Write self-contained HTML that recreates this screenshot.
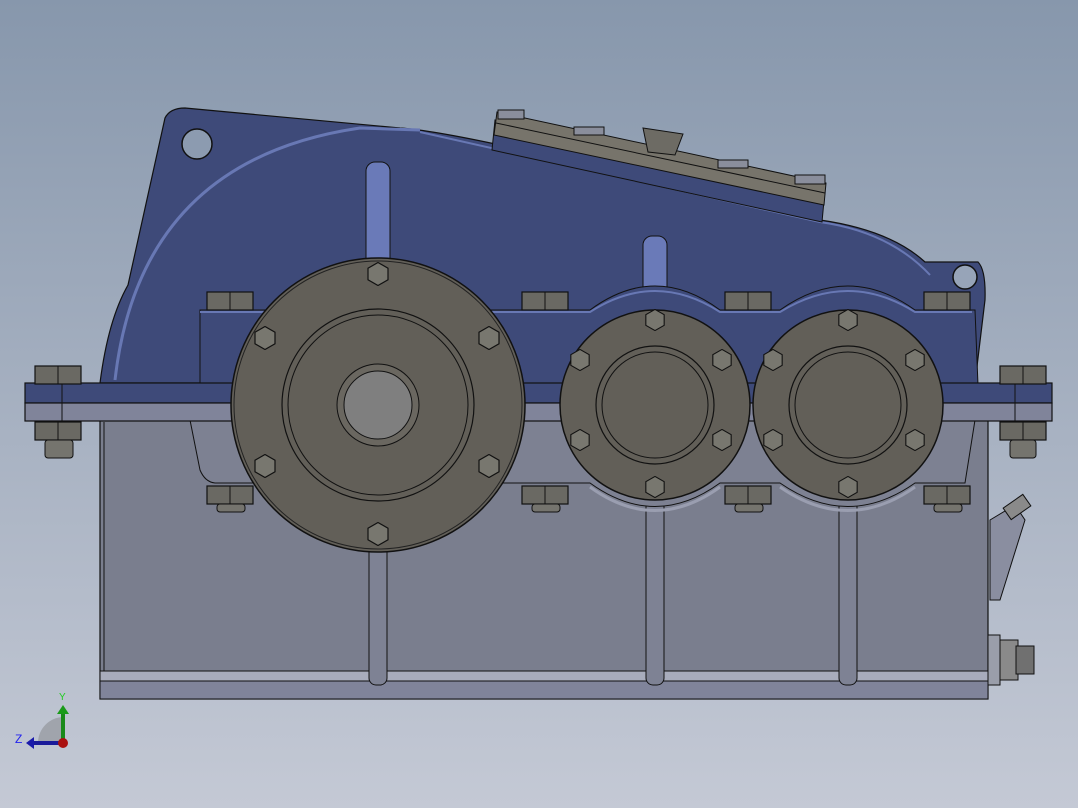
<!DOCTYPE html>
<html><head><meta charset="utf-8"><style>
html,body{margin:0;padding:0;width:1078px;height:808px;overflow:hidden}
</style></head><body>
<svg width="1078" height="808" viewBox="0 0 1078 808" xmlns="http://www.w3.org/2000/svg" font-family="Liberation Sans, sans-serif">
<defs>
<linearGradient id="bg" x1="0" y1="0" x2="0" y2="1"><stop offset="0" stop-color="#8797ac"/><stop offset="1" stop-color="#c4c9d5"/></linearGradient>
<symbol id="hex" viewBox="-12 -12 24 24"><polygon points="0,-11.5 10,-5.8 10,5.8 0,11.5 -10,5.8 -10,-5.8" fill="#78776f" stroke="#111" stroke-width="1.2"/></symbol>
<g id="nut"><rect x="-23" y="-9" width="46" height="18" fill="#6a6963" stroke="#111" stroke-width="1.2"/><line x1="0" y1="-9" x2="0" y2="9" stroke="#111"/></g>
</defs>
<rect width="1078" height="808" fill="url(#bg)"/>
<!-- lower housing -->
<rect x="100" y="420" width="888" height="279" fill="#7a7e8e" stroke="#111" stroke-width="1.2"/>
<rect x="100" y="671" width="888" height="10" fill="#a8acbc" stroke="#111"/>
<rect x="100" y="681" width="888" height="18" fill="#80849a" stroke="#111"/>
<line x1="104" y1="422" x2="104" y2="671" stroke="#111"/>
<g fill="#7e8294" stroke="#111">
<rect x="369" y="500" width="18" height="185" rx="7"/>
<rect x="646" y="500" width="18" height="185" rx="7"/>
<rect x="839" y="500" width="18" height="185" rx="7"/>
</g>
<!-- lower bearing arches -->
<path d="M190 420 L200 470 Q205 482 215 483 L590 483 Q655 530 720 483 L780 483 Q848 530 915 483 L965 483 L975 420 Z" fill="#7d8192" stroke="#111"/>
<path d="M590 487 Q655 534 720 487 M780 487 Q848 534 915 487" fill="none" stroke="#9a9eb0" stroke-width="3"/>
<!-- upper cover -->
<path d="M100 383 Q108 320 128 285 L165 118 Q170 108 185 108 L400 128 Q430 130 500 145 L820 220 Q890 230 925 262 L978 262 Q986 270 985 300 L975 383 Z" fill="#3e4a79" stroke="#111" stroke-width="1.2"/>
<path d="M115 380 Q140 160 360 128 L420 130" fill="none" stroke="#6878b4" stroke-width="3"/>
<path d="M420 132 L820 222 Q890 232 930 275" fill="none" stroke="#6878b4" stroke-width="2"/>
<circle cx="197" cy="144" r="15" fill="#8c9bb0" stroke="#111" stroke-width="1.5"/>
<circle cx="965" cy="277" r="12" fill="#97a4b8" stroke="#111" stroke-width="1.5"/>
<rect x="366" y="162" width="24" height="110" rx="9" fill="#6a7ab8" stroke="#111"/>
<rect x="643" y="236" width="24" height="60" rx="9" fill="#6a7ab8" stroke="#111"/>
<path d="M200 310 L590 310 Q655 262 720 310 L780 310 Q848 262 915 310 L975 310 L978 385 L200 385 Z" fill="#3e4a79" stroke="#111"/>
<path d="M200 312 L590 312 Q655 270 720 312 L780 312 Q848 270 915 312 L972 312" fill="none" stroke="#6878b4" stroke-width="2"/>
<!-- top inspection cover -->
<path d="M495 120 L825 190 L822 222 L492 150 Z" fill="#3e4a79" stroke="#111"/>
<path d="M497 112 L826 183 L824 205 L494 135 Z" fill="#77746b" stroke="#111"/>
<line x1="496" y1="123" x2="825" y2="193" stroke="#111"/>
<path d="M643 128 L683 134 L675 155 L648 152 Z" fill="#6d6b64" stroke="#111"/>
<g fill="#8a8e9c" stroke="#111"><rect x="498" y="110" width="26" height="9"/><rect x="574" y="127" width="30" height="8"/><rect x="718" y="160" width="30" height="8"/><rect x="795" y="175" width="30" height="9"/></g>
<!-- flange band -->
<rect x="25" y="383" width="1027" height="20" fill="#3e4a79" stroke="#111" stroke-width="1.2"/>
<rect x="25" y="403" width="1027" height="18" fill="#80849a" stroke="#111" stroke-width="1.2"/>
<line x1="62" y1="383" x2="62" y2="421" stroke="#111"/><line x1="1015" y1="383" x2="1015" y2="421" stroke="#111"/>
<!-- nuts -->
<g>
<use href="#nut" x="58" y="375"/><use href="#nut" x="58" y="431"/>
<use href="#nut" x="1023" y="375"/><use href="#nut" x="1023" y="431"/>
<use href="#nut" x="230" y="301"/><use href="#nut" x="545" y="301"/><use href="#nut" x="748" y="301"/><use href="#nut" x="947" y="301"/>
<use href="#nut" x="230" y="495"/><use href="#nut" x="545" y="495"/><use href="#nut" x="748" y="495"/><use href="#nut" x="947" y="495"/>
</g>
<g fill="#75746e" stroke="#111"><rect x="45" y="440" width="28" height="18" rx="3"/><rect x="1010" y="440" width="26" height="18" rx="3"/><rect x="217" y="504" width="28" height="8" rx="3"/><rect x="532" y="504" width="28" height="8" rx="3"/><rect x="735" y="504" width="28" height="8" rx="3"/><rect x="934" y="504" width="28" height="8" rx="3"/></g>
<!-- big flange -->
<circle cx="378" cy="405" r="147" fill="#625f58" stroke="#111" stroke-width="1.5"/>
<circle cx="378" cy="405" r="144" fill="none" stroke="#222"/>
<circle cx="378" cy="405" r="96" fill="none" stroke="#111" stroke-width="1.2"/>
<circle cx="378" cy="405" r="90" fill="none" stroke="#111"/>
<circle cx="378" cy="405" r="41" fill="#6a6760" stroke="#111"/>
<circle cx="378" cy="405" r="34" fill="#7f7f7f" stroke="#111"/>
<g><use href="#hex" x="366" y="262" width="24" height="24"/><use href="#hex" x="366" y="522" width="24" height="24"/><use href="#hex" x="253" y="326" width="24" height="24"/><use href="#hex" x="477" y="326" width="24" height="24"/><use href="#hex" x="253" y="454" width="24" height="24"/><use href="#hex" x="477" y="454" width="24" height="24"/></g>
<!-- small flanges -->
<g>
<circle cx="655" cy="405" r="95" fill="#625f58" stroke="#111" stroke-width="1.5"/>
<circle cx="655" cy="405" r="59" fill="none" stroke="#111" stroke-width="1.2"/>
<circle cx="655" cy="405" r="53" fill="#625f58" stroke="#111"/>
<circle cx="848" cy="405" r="95" fill="#625f58" stroke="#111" stroke-width="1.5"/>
<circle cx="848" cy="405" r="59" fill="none" stroke="#111" stroke-width="1.2"/>
<circle cx="848" cy="405" r="53" fill="#625f58" stroke="#111"/>
</g>
<g>
<use href="#hex" x="644" y="309" width="22" height="22"/><use href="#hex" x="644" y="476" width="22" height="22"/><use href="#hex" x="569" y="349" width="22" height="22"/><use href="#hex" x="711" y="349" width="22" height="22"/><use href="#hex" x="569" y="429" width="22" height="22"/><use href="#hex" x="711" y="429" width="22" height="22"/>
<use href="#hex" x="837" y="309" width="22" height="22"/><use href="#hex" x="837" y="476" width="22" height="22"/><use href="#hex" x="762" y="349" width="22" height="22"/><use href="#hex" x="904" y="349" width="22" height="22"/><use href="#hex" x="762" y="429" width="22" height="22"/><use href="#hex" x="904" y="429" width="22" height="22"/>
</g>
<!-- side fittings -->
<path d="M990 520 L1015 505 L1025 520 L1000 600 L990 600 Z" fill="#8a8ea0" stroke="#111"/>
<rect x="1005" y="500" width="24" height="14" transform="rotate(-35 1017 507)" fill="#8a8a8a" stroke="#111"/>
<rect x="988" y="635" width="12" height="50" fill="#9a9eaa" stroke="#111"/>
<rect x="1000" y="640" width="18" height="40" fill="#8a8a8a" stroke="#111"/>
<rect x="1016" y="646" width="18" height="28" fill="#707070" stroke="#111"/>
<!-- axis triad -->
<path d="M38 742 A26 26 0 0 1 63 717 L63 742 Z" fill="#a0a4ac"/>
<line x1="63" y1="742" x2="63" y2="712" stroke="#1a8a1a" stroke-width="4"/>
<polygon points="57,714 69,714 63,705" fill="#1a9a1a"/>
<line x1="63" y1="743" x2="32" y2="743" stroke="#1a1a9a" stroke-width="4"/>
<polygon points="34,737 34,749 26,743" fill="#1a1aaa"/>
<circle cx="63" cy="743" r="5" fill="#aa1010"/>
<text x="59" y="700" font-size="10" fill="#22cc22">Y</text>
<text x="15" y="743" font-size="12" fill="#2222ee">Z</text>
</svg>
</body></html>
